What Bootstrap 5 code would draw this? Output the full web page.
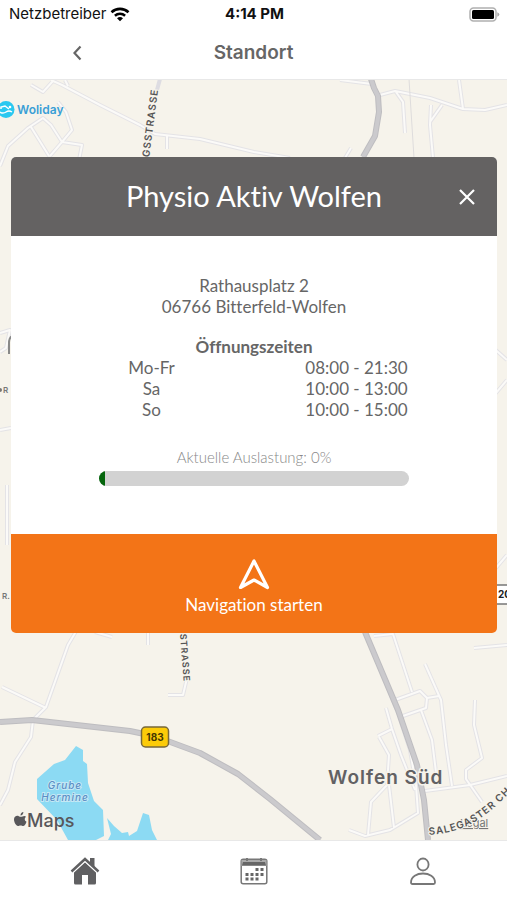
<!DOCTYPE html>
<html lang="de">
<head>
<meta charset="utf-8">
<meta name="viewport" content="width=device-width, initial-scale=1">
<title>Standort</title>
<link href="https://cdn.jsdelivr.net/npm/bootstrap@5.3.0/dist/css/bootstrap.min.css" rel="stylesheet">
<style>
body { font-family: Inter, "Liberation Sans", sans-serif; color: #666; background: #fff; }
.status-bar { height: 27px; padding: 1px 7px 0 9px; font-size: 15px; color: #111; }
.status-bar > * { flex: 1 1 0; }
.title-bar { height: 52px; }
.title-bar > * { flex: 1 1 0; }
.title-bar h1 { font-size: 19px; font-weight: 600; color: #666; }
.back-btn { padding: 4px 12px; margin-right: 16px; }
.map-area { border-top: 1px solid #e8e8e8; border-bottom: 1px solid #e8e8e8; background: #f6f3eb; padding: 77px 10px 0 11px; }
.map-canvas { z-index: 0; }
.studio { z-index: 1; font-family: Lato, sans-serif; font-variant-ligatures: none; border-radius: 5px; }
.studio-head { height: 79px; background: #646262; }
.studio-head h2 { font-size: 29px; }
.close-btn { right: 12px; padding: 8px; }
.studio-body { padding: 39px 38px 48px; font-size: 17px; line-height: 21px; color: #666; }
.hours { margin-top: 19px; table-layout: fixed; }
.hours th, .hours td { padding: 0; }
.hours caption { caption-side: top; padding: 0; color: #666; font-weight: 700; text-align: center; }
.load { margin: 27px auto 0; width: 310px; max-width: 100%; }
.load-text { font-size: 15px; color: #888; font-weight: 300; }
.load .progress { height: 15px; border-radius: 8px; background: #d2d2d2; margin-top: 3px; }
.load .progress-bar { background: #04650c; }
.go-btn { background: #f37417; color: #fff; height: 99px; font-size: 17px; line-height: 22px; padding-top: 12px; font-variant-ligatures: none; }
.go-btn:hover { background: #e86b10; color: #fff; }
.tab-bar { height: 59px; padding-top: 1px; }
.road-edge { fill: none; stroke: #e4e3e6; stroke-width: 4; stroke-linejoin: round; }
.road-fill { fill: none; stroke: #fbfaf8; stroke-width: 2; stroke-linejoin: round; }
.main-edge { fill: none; stroke: #bebdc0; stroke-width: 6; stroke-linejoin: round; }
.main-fill { fill: none; stroke: #cbcacd; stroke-width: 4; stroke-linejoin: round; }
.street { font-size: 9px; font-weight: 600; fill: #555; letter-spacing: 1px; paint-order: stroke; stroke: #f6f3eb; stroke-width: 2px; }
.street-lg { font-size: 10px; }
</style>
<script src="https://cdn.jsdelivr.net/npm/bootstrap@5.3.0/dist/js/bootstrap.bundle.min.js"></script>
</head>
<body class="d-flex flex-column min-vh-100">
<header>
  <div class="status-bar d-flex align-items-center">
    <div class="d-flex align-items-center gap-1"><span>Netzbetreiber</span>
      <svg width="20" height="15" viewBox="0 0 20 15" fill="none" stroke="#000" stroke-width="2.6" aria-label="WLAN"><path d="M1.500 5.200a12.500 12.500 0 0 1 17 0M4.900 8.700a7.800 7.800 0 0 1 10.200 0"/><path d="M10 14.200 7 11.300a4.400 4.400 0 0 1 6 0z" fill="#000" stroke="none"/></svg>
    </div>
    <div class="text-center fw-bold">4:14 PM</div>
    <div class="d-flex justify-content-end">
      <svg width="31" height="15" viewBox="0 0 31 15" aria-label="Akku"><rect x="1" y="1" width="26" height="13" rx="3.500" fill="#fff" stroke="#b0b0b0" stroke-width="1.500"/><rect x="3" y="3" width="22" height="9" rx="1.500" fill="#000"/><path d="M28.300 5.200q2 .7 2 2.300t-2 2.300z" fill="#aaa"/></svg>
    </div>
  </div>
  <div class="title-bar d-flex align-items-center">
    <div class="text-center"><button class="btn back-btn" type="button" aria-label="Zurück"><svg class="d-block" width="10" height="16" viewBox="0 0 10 16" fill="none" stroke="#666" stroke-width="2.200"><path d="M8.500 1.500 2.500 8l6 6.500"/></svg></button></div>
    <h1 class="m-0 text-center">Standort</h1>
    <div></div>
  </div>
</header>

<main class="map-area position-relative flex-grow-1 overflow-hidden">
  <svg class="map-canvas position-absolute top-0 start-0 w-100 h-100" viewBox="0 80 507 760" preserveAspectRatio="xMidYMid slice" aria-label="Karte">
    <defs>
      <g id="roads">
        <path d="M51 80 62 85 100 105 140 125 155 134 200 139 254 152 290 158M68 86 65 80M53 81 43 92 31 85M167 136V149"/>
        <path d="M0 166 8 146 28 128 43 118 51 125 62 142 50 156M31 127 49 156M58 102 66 112 72 130 62 142 82 145 79 160"/>
        <path d="M340 80 372 84M380 95 395 91 430 98 463 109 485 110 507 105M459 80 463 109M396 92 403 102 405 133M431 105 430 125 433 158M442 105 430 122M345 158 351 148"/>
        <path d="M0 333 10 330 6 348 0 352M0 430 11 428M7 545V485M490 400 507 380M490 345 507 360M490 575 507 555"/>
        <path d="M78 628 68 645 46 707 33 720 31 737 15 762 8 790 0 805M2 687 46 708M95 632 112 637M148 630V645M187 678 183 695H168"/>
        <path d="M366 634 398 713 410 750 416 785 418 813 390 830 365 836 349 830M374 636 393 634 412 692M395 700 420 691 427 698 426 708 400 717M427 698 439 696M425 664 441 700 446 745 452 786M421 710 432 740 436 772M386 708 392 729 401 755 415 790M392 729 378 736M379 737 389 755 387 785 371 802 368 835M389 785 394 828"/>
        <path d="M425 791 470 785 507 776M475 700 474 725 482 758 466 770 466 779 482 802M507 645 474 648"/>
      </g>
      <g id="mainroads">
        <path d="M371 79 374 88 378 96 379 112 375 136 363 157"/>
        <path d="M0 722 32 720 130 731 154 736 200 753 238 774 270 799 320 840"/>
        <path d="M365 632 398 710 417 765 424 800 428 840"/>
      </g>
      <path id="strasseTop" d="M148 166 160 76"/>
      <path id="strasseLow" d="M180 634 185 700"/>
      <path id="chaussee" d="M429 835 C463 832 482 823 520 782"/>
    </defs>
    <rect x="0" y="80" width="507" height="760" fill="#f6f3eb"/>
    <use href="#roads" class="road-edge"/>
    <use href="#roads" class="road-fill"/>
    <path d="M409 79 414 158" fill="none" stroke="#dedcdc"/>
    <path d="M160 79 157 90" fill="none" stroke="#dddce2" stroke-width="4"/>
    <use href="#mainroads" class="main-edge"/>
    <use href="#mainroads" class="main-fill"/>
    <path d="M76 746 83 750V761L87 764 88 783 94 801 103 810 104 836 96 840H68L57 820 37 799V779L54 764 65 760Z" fill="#8cdaf3"/>
    <path d="M107 818 114 826 122 833 128 832 129 836 137 831 143 813 149 815 152 830 157 840H108L111 834Z" fill="#8cdaf3"/>
    <circle cx="6" cy="109.500" r="8.500" fill="#2bc8f0"/>
    <path d="M1 109V107L5 106 9 109M0 112q3 2 6 0t6 0" fill="none" stroke="#fff" stroke-width="1.500"/>
    <circle cx="10" cy="107" r="1.300" fill="#fff"/>
    <text x="17" y="114" font-size="12" font-weight="600" fill="#3a9fd6">Woliday</text>
    <text class="street street-lg"><textPath href="#strasseTop">NGSSTRASSE</textPath></text>
    <text class="street"><textPath href="#strasseLow">STRASSE</textPath></text>
    <text x="460" y="827" font-size="11" fill="#777" text-decoration="underline">Legal</text>
    <text class="street street-lg"><textPath href="#chaussee">SALEGASTER CH</textPath></text>
    <text x="328" y="784" font-size="19" font-weight="600" fill="#626163" letter-spacing="1" stroke="#f6f3eb" stroke-width="3" paint-order="stroke">Wolfen Süd</text>
    <g font-size="10" font-style="italic" font-weight="500" fill="#5b8fc5" letter-spacing="1" text-anchor="middle" stroke="#c5e8f5" stroke-width="2" paint-order="stroke"><text x="65" y="789">Grube</text><text x="65" y="801">Hermine</text></g>
    <rect x="141.500" y="727" width="27" height="20" rx="4" fill="#fccb08" stroke="#77683a" stroke-width="1.500"/>
    <text x="155" y="741" text-anchor="middle" font-size="10" font-weight="700" fill="#443600">183</text>
    <g font-size="8" font-weight="600" fill="#777"><text x="3" y="393">R</text><text x="2" y="599">R.</text><circle cx="0" cy="390" r="2"/></g>
    <path d="M12 336Q9 338 9 343V354" fill="none" stroke="#888" stroke-width="2"/>
    <rect x="488" y="585" width="28" height="19" fill="#fff" stroke="#777" stroke-width="1.500"/>
    <text x="498" y="598" font-size="10" font-weight="700" fill="#222">20</text>
    <path d="M22.500 816.500c1.200-.6 2.400-.9 3.500.2-1.900 1.300-1.700 4 .5 5-.8 2.300-2 4.300-3.300 4.300-1 0-1.400-.6-2.600-.6s-1.700.6-2.600.6c-2 0-4-4-4-6.500 0-3 2.700-4.300 4.800-3.300 1.200.6 2.200.8 3.700.3ZM20.500 815.500c0-1.900 1.300-3.200 2.900-3.400.1 1.900-1.300 3.400-2.900 3.400Z" fill="#58575a"/>
    <text x="27" y="827" font-size="18" font-weight="500" fill="#58575a">Maps</text>
  </svg>

  <section class="studio card border-0 overflow-hidden">
    <div class="studio-head position-relative d-flex align-items-center justify-content-center">
      <h2 class="m-0 text-white fw-normal">Physio Aktiv Wolfen</h2>
      <button class="btn close-btn position-absolute" type="button" aria-label="Schließen"><svg class="d-block" width="18" height="18" viewBox="0 0 18 18" stroke="#fff" stroke-width="2.200"><path d="m2 2 14 14M16 2 2 16"/></svg></button>
    </div>
    <div class="studio-body text-center">
      <address class="m-0">Rathausplatz 2<br>06766 Bitterfeld-Wolfen</address>
      <table class="hours w-100">
        <caption>Öffnungszeiten</caption>
        <tbody>
          <tr><th class="fw-normal text-center" scope="row">Mo-Fr</th><td>08:00 - 21:30</td></tr>
          <tr><th class="fw-normal text-center" scope="row">Sa</th><td>10:00 - 13:00</td></tr>
          <tr><th class="fw-normal text-center" scope="row">So</th><td>10:00 - 15:00</td></tr>
        </tbody>
      </table>
      <div class="load">
        <div class="load-text" id="load-label">Aktuelle Auslastung: 0%</div>
        <div class="progress" role="progressbar" aria-labelledby="load-label" aria-valuenow="0" aria-valuemin="0" aria-valuemax="100"><div class="progress-bar" style="width: 2%"></div></div>
      </div>
    </div>
    <button class="go-btn btn border-0 rounded-0 d-flex flex-column align-items-center justify-content-center gap-1" type="button">
      <svg width="32" height="32" viewBox="0 0 32 32" fill="none" stroke="#fff" stroke-width="3.200" stroke-linejoin="round"><path d="M16 3 2.500 29.500 16 22 29.500 29.500Z"/></svg>
      <span>Navigation starten</span>
    </button>
  </section>
</main>

<nav class="tab-bar nav nav-fill align-items-center" aria-label="Hauptnavigation">
  <a class="nav-item d-flex justify-content-center" href="#start" aria-label="Start"><svg width="30" height="28" viewBox="0 0 30 28"><path d="M20 1H24.500V11L20 7Z" fill="#606062"/><path d="M4 15 15 5 26 15V26Q26 27.500 24.500 27.500H18V18H12V27.500H5.500Q4 27.500 4 26Z" fill="#606062"/><path d="M2 16.500 15 4.500 28 16.500" fill="none" stroke="#fff" stroke-width="1.300"/><path d="M1.500 14.500 15 2 28.500 14.500" fill="none" stroke="#606062" stroke-width="2.400"/></svg></a>
  <a class="nav-item d-flex justify-content-center" href="#termine" aria-label="Termine"><svg width="28" height="28" viewBox="0 0 28 28"><rect x="1.200" y="2.200" width="25.600" height="24.600" rx="2" fill="#fff" stroke="#777" stroke-width="1.500"/><path d="M1.500 3H26.500V9H1.500Z" fill="#aaa"/><path d="M3 5H25L26 8.500H2Z" fill="#666"/><path d="M7 1V4M21 1V4" stroke="#777" stroke-width="2"/><path d="M15.500 12.500h3m2 0h3M5.500 17.500h3m2 0h3m2 0h3m2 0h3M5.500 22h3m2 0h3m2 0h3" stroke="#666" stroke-width="2.800"/></svg></a>
  <a class="nav-item d-flex justify-content-center" href="#profil" aria-label="Profil"><svg width="28" height="28" viewBox="0 0 28 28" fill="none" stroke="#777" stroke-width="1.800"><ellipse cx="14" cy="7.500" rx="5.600" ry="6"/><path d="M2 25.500C2 13.500 26 13.500 26 25.500Q26 27 24.500 27H3.500Q2 27 2 25.500Z"/></svg></a>
</nav>
</body>
</html>
